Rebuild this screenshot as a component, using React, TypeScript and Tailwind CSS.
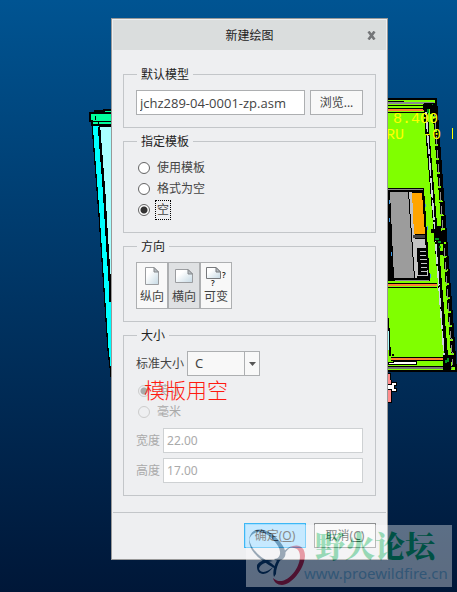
import { useState } from "react";
import type { ReactNode } from "react";
import { clsx } from "clsx";

const TEMPLATES = ["使用模板", "格式为空", "空"];
const UNITS = ["英寸", "毫米"];
const SIZES = ["A", "B", "C", "D", "E", "F"];

function CabinetModel() {
  return (
    <svg
      width="457"
      height="592"
      viewBox="0 0 457 592"
      className="absolute top-0 left-0"
      shapeRendering="crispEdges"
      aria-hidden="true"
    >
      {/* Door on the left */}
      <path d="M92 124L112 124V384L108 350L99 215Z" fill="#00ffff" stroke="#000" strokeWidth="1.3" />
      <path d="M100 126H112V302L108 262Z" fill="#a8ffff" />
      <path d="M99 127L101 152L104 190L107 240L110 285V302" fill="none" stroke="#000" strokeWidth="2.5" />
      <path d="M90 113H95V111H104V110H112V125H92V121H90Z" fill="#00ff9c" stroke="#000" strokeWidth="2" />
      <path d="M90 113H112" stroke="#000" strokeWidth="2" />
      <path d="M91 121H112M95 116V120M98 121V126" fill="none" stroke="#000" />
      <path d="M99 125.500H112" stroke="#000" strokeWidth="2" />

      {/* Cabinet body */}
      <path d="M386 99H436L456 371H386Z" fill="#80ff00" stroke="#000" strokeWidth="2" />
      <path d="M386 103H434" stroke="#8c8c8c" strokeWidth="2" />
      <path d="M386 101H404M386 105H432M386 108H426" stroke="#000" />
      <path d="M386 110H425" stroke="#ff8230" strokeWidth="2" />
      <path d="M386 112H424" stroke="#000" />
      <path d="M425 104L446 356" stroke="#000" strokeWidth="4" />
      <path d="M426 112L444 355" stroke="#cfd6dc" strokeWidth="1.5" strokeDasharray="20 2" />
      <path d="M434 104L454 368" stroke="#000" strokeWidth="4" strokeDasharray="12 2" />
      <path d="M434 108L453 365" stroke="#8c8c8c" strokeDasharray="9 5" />
      <path d="M424 103H435V114H430V109H424Z" fill="#000" />
      <path d="M427 109H429V113H427ZM432 104H433V105H432Z" fill="#009420" />
      <path d="M431 229H437V226H441V231H444V244H440V251H443V255H437V241H434V233H431Z" fill="#000" />
      <path d="M435 239H439M438 242H441M439 247H441" stroke="#009420" strokeWidth="2" />

      {/* Mounting panel */}
      <path d="M386 188H424L430 281H386Z" fill="#000" />
      <path d="M386 189.500H423M395 280.500H429" stroke="#8c8c8c" />
      <path d="M390 192H408L414 278H394Z" fill="#9c9c9c" />
      <path d="M409 192H412L415 239H425L428 276H417V278H415Z" fill="#c4c4c4" />
      <path d="M412 193H422L425 234H414Z" fill="#ffa500" />
      <path d="M413 235H425V238H413Z" fill="#444" />
      <path d="M422 248V275" stroke="#000" strokeWidth="9" strokeDasharray="3 1" />
      <path d="M418 248L420 275" stroke="#000" strokeWidth="3" />
      <path d="M389 200V204M389 218V222M391 252V256M425 204V207M427 226V230M430 274V278" stroke="#3d9ae8" />
      <path d="M386 283H437M386 287H437" stroke="#000" />
      <path d="M386 285H437" stroke="#ff8230" strokeWidth="2" />

      {/* Base */}
      <path d="M388 318L390 356" stroke="#000" strokeWidth="2" />
      <path d="M388 331V350" stroke="#a8ffff" />
      <path d="M392 354H393V355H392Z" stroke="#000" />
      <path d="M391 357H443M391 360H443" stroke="#000" />
      <path d="M391 358.500H443" stroke="#ff8230" strokeWidth="2" />
      <path d="M393 361.500H416V364.500H388V362.500H393Z" fill="#fff" stroke="#000" />
      <path d="M386 367.500H452" stroke="#777" strokeWidth="3" />
      <path d="M386 366H453M386 370.500H456" stroke="#000" />
      <path d="M443 355H451V372H443Z" fill="#000" />
      <path d="M446 360V363M448 358V362" stroke="#009420" strokeWidth="2" />

      {/* Caster and key */}
      <path d="M386 373H390L391 380V402H386Z" fill="#ff8c8c" stroke="#000" />
      <path d="M386 384H391V382H396V385H394V388H396V391H391V389H386Z" fill="#fff" stroke="#000" />

      <g fill="#ffff00" fontFamily="Liberation Mono, monospace" fontSize="15">
        <text x="393" y="123">8.400</text>
        <text x="386" y="139">RU</text>
        <text x="423" y="139">-0</text>
      </g>
      <path d="M452.500 128V139" stroke="#ffff00" />
    </svg>
  );
}

function PageShape({ landscape = false }: { landscape?: boolean }) {
  return (
    <>
      <path
        d={landscape ? "M.5.5H13L17.500 5V13.500H.5Z" : "M.5.5H9L13.500 5V17.500H.5Z"}
        fill="url(#sheet)"
        stroke="#9b9da0"
      />
      <path
        d={landscape ? "M13 .5V5H17.500Z" : "M9 .5V5H13.500Z"}
        fill="#b8bfc4"
        stroke="#85888b"
      />
    </>
  );
}

function OrientationIcon({ kind }: { kind: string }) {
  return (
    <svg width="26" height="22" viewBox="0 0 26 22" className="overflow-visible" aria-hidden="true">
      <defs>
        <linearGradient id="sheet" x1="0" y1="0" x2="1" y2="1">
          <stop offset="0.3" stopColor="#ffffff" />
          <stop offset="1" stopColor="#c5d9e4" />
        </linearGradient>
      </defs>
      {kind === "portrait" && (
        <g transform="translate(6 1)">
          <PageShape />
        </g>
      )}
      {kind === "landscape" && (
        <g transform="translate(4 3)">
          <PageShape landscape />
        </g>
      )}
      {kind === "variable" && (
        <g transform="translate(3 1)">
          <path d="M.5.5H10L14.500 5V11.500H.5Z" fill="url(#sheet)" stroke="#77797c" />
          <path d="M10 .5V5H14.500Z" fill="#b8bfc4" stroke="#77797c" />
          <g fill="#222" fontFamily="Noto Sans, sans-serif" fontSize="8" fontWeight="600">
            <text x="16" y="11">?</text>
            <text x="5" y="19">?</text>
          </g>
        </g>
      )}
    </svg>
  );
}

const ORIENTATIONS = [
  { id: "portrait", label: "纵向" },
  { id: "landscape", label: "横向" },
  { id: "variable", label: "可变" },
];

function Group({ title, children }: { title: string; children: ReactNode }) {
  return (
    <fieldset className="min-w-0 border border-[#c3c6c9] px-3 pt-2 pb-3">
      <legend className="ml-px h-4 px-1 leading-[18px] text-[#222]">{title}</legend>
      {children}
    </fieldset>
  );
}

interface RadioProps {
  name: string;
  label: string;
  checked: boolean;
  disabled?: boolean;
  onChange: () => void;
}

function Radio({ name, label, checked, disabled, onChange }: RadioProps) {
  return (
    <label className={clsx("flex h-[21px] items-center gap-[5px] pl-0.5", disabled && "text-[#aaa]")}>
      <input
        type="radio"
        name={name}
        checked={checked}
        disabled={disabled}
        onChange={onChange}
        className="size-3 appearance-none rounded-full border border-[#666] bg-white bg-clip-padding checked:bg-[radial-gradient(circle,#333_3px,#fff_4px)] disabled:border-[#ccc] disabled:bg-[#eeeff1] disabled:checked:bg-[radial-gradient(circle,#aaa_3px,#eeeff1_4px)]"
      />
      <span
        className={clsx(
          "border border-dotted px-px leading-[18px]",
          checked && !disabled ? "border-black" : "border-transparent"
        )}
      >
        {label}
      </span>
    </label>
  );
}

function Dimension({ id, label, value }: { id: string; label: string; value: string }) {
  return (
    <div className="flex items-center gap-[3px] text-[#aaa]">
      <label htmlFor={id}>{label}</label>
      <input
        id={id}
        defaultValue={value}
        disabled
        className="h-[25px] min-w-0 flex-1 border border-[#ced1d3] bg-white px-[3px]"
      />
    </div>
  );
}

function Watermark() {
  return (
    <div className="pointer-events-none absolute top-[525px] left-[246px] h-[62px] w-[206px] bg-white opacity-[0.36]">
      <svg width="60" height="62" viewBox="0 0 60 62" className="absolute top-0 left-0" aria-hidden="true">
        <g fill="#062c50">
          <path d="M3 17C3 2 17 2 26 9C35 16 44 28 37 34C34 36 30 36 28 34C34 34 36 28 32 21C26 11 15 3 7 9C4 11 3 14 3 17Z" />
          <path d="M3 14C5 24 13 32 25 38L31 43L28 43C14 35 3 27 3 14Z" />
          <path d="M11 40C14 35 21 34 27 36C20 37 14 39 13 44C15 49 22 47 27 42C21 52 10 51 11 40Z" />
          <path d="M28 52C25 42 35 25 46 21C37 28 30 40 30 49Z" />
        </g>
        <path
          d="M43 23C51 18 59 21 59 31C58 45 45 60 36 60C31 60 28 57 27 53C33 59 42 56 49 46C56 36 57 20 43 23Z"
          fill="#d80720"
        />
      </svg>
      <span className="absolute top-0 left-[69px] font-['Noto_Serif_CJK_SC','Noto_Sans_CJK_SC',serif] text-[30px] leading-[38px] font-black whitespace-nowrap text-[#00b050]">
        野火论坛
      </span>
      <span className="absolute top-[38px] left-[58px] font-['Noto_Sans',sans-serif] text-[15px] leading-5 whitespace-nowrap text-[#8bc5e1]">
        www.proewildfire.cn
      </span>
    </div>
  );
}

export default function App() {
  const [template, setTemplate] = useState("空");
  const [orientation, setOrientation] = useState("landscape");
  const [unit, setUnit] = useState("英寸");

  return (
    <main className="relative min-h-screen overflow-hidden bg-linear-to-b from-[#005492] to-[#001738] pt-[18px] pr-[69px] pb-8 pl-[111px] font-['Noto_Sans','Noto_Sans_CJK_SC',sans-serif] text-xs text-[#444]">
      <CabinetModel />
      <div
        role="dialog"
        aria-labelledby="dialog-title"
        className="relative border border-[#999] bg-[#eeeff1] p-px"
      >
        <header className="relative flex h-[30px] items-center justify-center bg-[#dadddd]">
          <h1 id="dialog-title" className="pt-0.5 text-[#222]">
            新建绘图
          </h1>
          <button type="button" aria-label="关闭" className="absolute top-[11px] right-2.5">
            <svg width="9" height="9" viewBox="0 0 9 9">
              <path d="M1.500 .5L7.500 8.500M7.500 .5L1.500 8.500" stroke="#747678" strokeWidth="2.600" />
            </svg>
          </button>
        </header>

        <form className="pt-4" onSubmit={(e) => e.preventDefault()}>
          <div className="flex flex-col gap-[5px] px-2.5">
            <Group title="默认模型">
              <div className="flex gap-[5px]">
                <input
                  aria-label="默认模型"
                  defaultValue="jchz289-04-0001-zp.asm"
                  className="h-[25px] min-w-0 flex-1 border border-[#adafb1] bg-white px-[3px] font-['Open_Sans',sans-serif] text-[13px]"
                />
                <button type="button" className="h-[25px] w-[53px] border border-[#adafb1] bg-[#f8f8f8]">
                  浏览...
                </button>
              </div>
            </Group>

            <Group title="指定模板">
              {TEMPLATES.map((t) => (
                <Radio
                  key={t}
                  name="template"
                  label={t}
                  checked={template === t}
                  onChange={() => setTemplate(t)}
                />
              ))}
            </Group>

            <Group title="方向">
              <div className="flex">
                {ORIENTATIONS.map((o) => (
                  <button
                    key={o.id}
                    type="button"
                    aria-pressed={orientation === o.id}
                    onClick={() => setOrientation(o.id)}
                    className={clsx(
                      "flex h-[47px] w-8 flex-col items-center border border-[#adafb1] pt-[3px] leading-[18px]",
                      orientation === o.id ? "bg-[#dfe1e3]" : "bg-[#f8f8f8]"
                    )}
                  >
                    <OrientationIcon kind={o.id} />
                    {o.label}
                  </button>
                ))}
              </div>
            </Group>

            <Group title="大小">
              <div className="flex items-center gap-[3px]">
                <label htmlFor="size">标准大小</label>
                <div className="relative">
                  <select
                    id="size"
                    defaultValue="C"
                    className="block h-[25px] w-[73px] appearance-none border border-[#adafb1] bg-[#f8f8f8] pl-[7px] text-[13px]"
                  >
                    {SIZES.map((s) => (
                      <option key={s}>{s}</option>
                    ))}
                  </select>
                  <span className="pointer-events-none absolute inset-y-0 right-0 flex w-4 items-center justify-center border-l border-[#adafb1]">
                    <svg width="7" height="4" viewBox="0 0 7 4">
                      <path d="M0 0H7L3.500 4Z" fill="#555" />
                    </svg>
                  </span>
                </div>
              </div>
              <div className="relative mt-1 mb-1.5">
                {UNITS.map((u) => (
                  <Radio
                    key={u}
                    name="unit"
                    label={u}
                    checked={unit === u}
                    disabled
                    onChange={() => setUnit(u)}
                  />
                ))}
                <span className="absolute -top-1 left-2 font-light text-[21px] leading-7 whitespace-nowrap text-[#ff1a10]">
                  模版用空
                </span>
              </div>
              <div className="flex flex-col gap-[5px]">
                <Dimension id="width" label="宽度" value="22.00" />
                <Dimension id="height" label="高度" value="17.00" />
              </div>
            </Group>
          </div>

          <footer className="mt-4 flex justify-end gap-2 border-t border-[#c3c6c9] px-2.5 pt-2.5 pb-2.5">
            <button type="submit" className="h-[25px] w-[62px] border border-[#3db8f5] bg-[#a6deff]">
              确定(<u>O</u>)
            </button>
            <button type="button" className="h-[25px] w-[62px] border border-[#8e9092] bg-[#f8f8f8]">
              取消(<u>C</u>)
            </button>
          </footer>
        </form>
      </div>
      <Watermark />
    </main>
  );
}
